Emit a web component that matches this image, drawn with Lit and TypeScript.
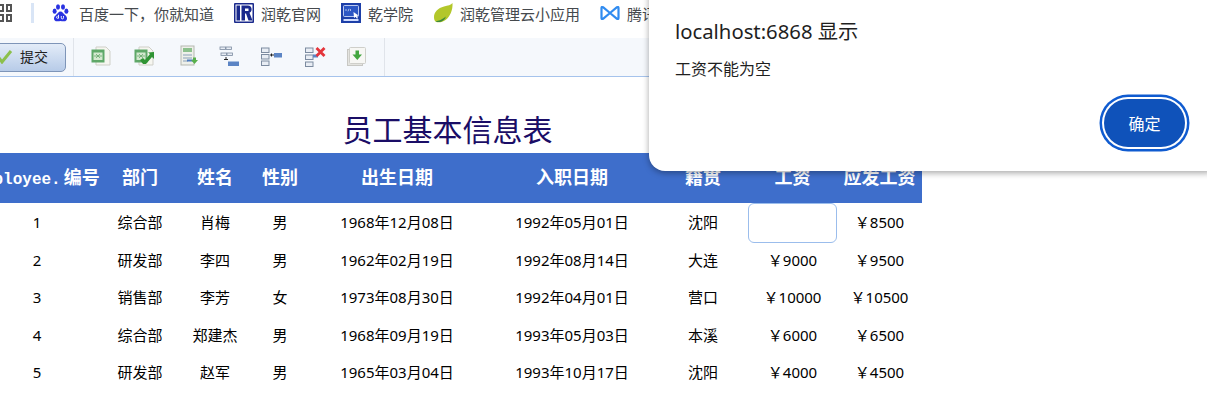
import { LitElement, html, css, svg } from "lit";
import { customElement } from "lit/decorators.js";

const rows = [
  ["1", "综合部", "肖梅", "男", "1968年12月08日", "1992年05月01日", "沈阳", "", "￥8500"],
  ["2", "研发部", "李四", "男", "1962年02月19日", "1992年08月14日", "大连", "￥9000", "￥9500"],
  ["3", "销售部", "李芳", "女", "1973年08月30日", "1992年04月01日", "营口", "￥10000", "￥10500"],
  ["4", "综合部", "郑建杰", "男", "1968年09月19日", "1993年05月03日", "本溪", "￥6000", "￥6500"],
  ["5", "研发部", "赵军", "男", "1965年03月04日", "1993年10月17日", "沈阳", "￥4000", "￥4500"],
];
const heads = ["部门", "姓名", "性别", "出生日期", "入职日期", "籍贯", "工资", "应发工资"];

const baidu = svg`<svg width="17" height="18" viewBox="0 0 17 18"><g fill="#2932e1"><ellipse cx="2.600" cy="7.200" rx="2" ry="2.600"/><ellipse cx="6" cy="3" rx="2" ry="2.700"/><ellipse cx="11" cy="3" rx="2" ry="2.700"/><ellipse cx="14.400" cy="7.200" rx="2" ry="2.600"/><path d="M8.500 7.500c-2 0-2.800 2-4.300 3.300C2.800 12 2 13 2 14.500 2 16.500 3.500 17.500 5.500 17.300c1.200-.1 2-.4 3-.4s1.800.3 3 .4c2 .2 3.500-.8 3.500-2.800 0-1.500-.8-2.500-2.200-3.700C11.300 9.500 10.500 7.500 8.500 7.500z"/></g><path d="M6.500 10.800v3.700M5.500 12.300a1 1 0 1 0 1 1M9.300 12v1.800a1 1 0 0 0 2.200 0V12" fill="none" stroke="#fff" stroke-width=".9"/></svg>`;
const runqian = svg`<svg width="20" height="20" viewBox="0 0 20 20"><rect width="20" height="20" rx="1" fill="#1a2a8c"/><rect x="1.500" y="1.500" width="17" height="17" fill="#fff"/><rect x="2.500" y="2.500" width="3.500" height="15" fill="#1a2a8c"/><path d="M7.500 2.500H14a3.800 3.800 0 0 1 1.500 7.200L18.500 17.500h-4l-2.500-7h-1v7H7.500z" fill="#1a2a8c"/><rect x="11" y="5.500" width="3.500" height="2.500" fill="#fff"/></svg>`;
const college = svg`<svg width="20" height="20" viewBox="0 0 20 20"><rect width="20" height="20" fill="#1d3fa8"/><rect x="2.500" y="2.500" width="15" height="11" rx="1" fill="#2c56c4" stroke="#dfe8ff" stroke-width=".8"/><path d="M5.500 6l-1 1 1 1M8 5.800l-1 2.500M9 6l1 1-1 1" stroke="#fff" stroke-width=".6" fill="none"/><path d="M12.500 9l5 3.500-2 .5 1.500 2-1 .7-1.500-2-1.500 1.200z" fill="#fff"/><rect x="2.500" y="16" width="15" height="2" fill="#cfdcff"/></svg>`;
const leaf = svg`<svg width="20" height="22" viewBox="0 0 20 22"><path d="M19.500 1C18 3 15 3.500 11 4.500 5 6 1 10 1 15c0 2 .5 3.500 1.500 4.500C5 21 9 20.500 12.500 18 17 14.800 20 8 19.500 1z" fill="#b3c72a"/><path d="M2.500 19.500c3-1 7-1.500 10-5 .5 2-2.500 5-6 5.500-1.500.2-3 .2-4-.5z" fill="#3d8a3a"/></svg>`;
const tencent = svg`<svg width="20" height="16" viewBox="0 0 20 16"><path d="M1.500 3 Q1.500 1.500 3 2.200 L10 8 17 2.200 Q18.500 1.500 18.500 3 V13 Q18.500 14.500 17 13.800 L10 8 3 13.800 Q1.500 14.500 1.500 13z" fill="none" stroke="#2f8bf0" stroke-width="2.200" stroke-linejoin="round"/></svg>`;

const sheet = (extra: unknown) => svg`<path d="M5 1h10l4 4v14H5z" fill="#f6f6f0" stroke="#cfcfc8"/><rect x="0.500" y="3.500" width="13" height="13" fill="#5fa868"/><rect x="2.500" y="6.500" width="9" height="7.500" fill="#d4e8cf"/><path d="M3 10h8M5 8l4 4M9 8l-4 4" stroke="#6aaa70" stroke-width=".8"/>${extra}`;
const node = (x: number, y: number) => svg`<rect x="${x}" y="${y}" width="7.500" height="4.500" fill="#e8edf4" stroke="#7c8ba0"/>`;
const cell = (x: number, y: number) => svg`<rect x="${x}" y="${y}" width="5.500" height="2.500" fill="#e8edf4" stroke="#7c8ba0" stroke-width=".8"/>`;
const toolIcons = [
  svg`<svg width="20" height="20" viewBox="0 0 20 20">${sheet("")}</svg>`,
  svg`<svg width="20" height="20" viewBox="0 0 20 20">${sheet(svg`<path d="M6 14l3-2 2 2 5-6-2-1.500 6-.5v7l-2-2-6 7h-3z" fill="#2f9434"/>`)}</svg>`,
  svg`<svg width="18" height="22" viewBox="0 0 18 22"><rect x="1" y="1" width="13" height="19" fill="#eef0ea" stroke="#b5b8b0"/><rect x="3" y="3" width="9" height="4" fill="#8cc08c"/><path d="M3 10h9M3 13h9M3 16h5" stroke="#8aa0b8"/><path d="M7 15.500h6" stroke="#4a7ac0" stroke-width="2"/><path d="M13 12.500h3v2.500h2l-3.500 4-3.500-4h2z" fill="#58b04c"/></svg>`,
  svg`<svg width="21" height="21" viewBox="0 0 21 21">${cell(1, 1)}${cell(7, 1)}${cell(2, 7)}${cell(8, 7)}<path d="M7 11v3" stroke="#222"/><path d="M5 13.500h4" stroke="#222"/><rect x="9" y="15.500" width="11" height="4.500" fill="#5b84c4"/></svg>`,
  svg`<svg width="21" height="20" viewBox="0 0 21 20">${node(0.500, 1)}${node(0.500, 7.500)}${node(0.500, 14)}<path d="M9 8h4M10.500 6.500v3" stroke="#222"/><rect x="13" y="6" width="8" height="4.500" fill="#5b84c4"/></svg>`,
  svg`<svg width="21" height="21" viewBox="0 0 21 21">${node(0.500, 2)}${node(0.500, 9)}${node(0.500, 16)}<path d="M8 10h5" stroke="#5b84c4" stroke-width="3"/><path d="M11.500 2l8 8M19.500 2l-8 8" stroke="#e4343a" stroke-width="2.800"/></svg>`,
  svg`<svg width="19" height="19" viewBox="0 0 19 19"><rect x="0.500" y="2.500" width="15" height="16" fill="#e4e4e0" stroke="#c8c8c4"/><rect x="2.500" y="0.500" width="16" height="16" rx="1" fill="#f7f7f4" stroke="#cfcfca"/><path d="M8.500 3.500h3.500v4h3l-4.700 5.500L5.500 7.500h3z" fill="#43a63f"/></svg>`,
];
const tools = [
  [91, 8], [134, 8], [180, 7], [219, 8], [261, 9], [305, 8], [347, 9],
];

@customElement("app-root")
export class AppRoot extends LitElement {
  static styles = css`
    :host { display: block; position: relative; width: 1207px; height: 400px; overflow: hidden; background: #fff; font-family: "Noto Sans", "Noto Sans CJK SC", sans-serif; color: #000; }
    .bookmarks { height: 38px; display: flex; align-items: center; color: #45494d; font-size: 15px; white-space: nowrap; box-sizing: border-box; padding-bottom: 12px; }
    .apps { width: 14px; height: 18px; margin-left: -2px; display: grid; grid-template-columns: 6px 6px; grid-template-rows: 8px 8px; gap: 2px; margin-right: 19px; }
    .apps i { border: 2px solid #555; box-sizing: border-box; }
    .sep { width: 3px; height: 20px; background: #d9e5f6; margin-right: 18px; }
    .bm { display: inline-flex; align-items: center; gap: 7px; margin-right: 20px; }
    .bm.wide { gap: 10px; }
    .toolbar { height: 38px; background: #f5f8fc; border-bottom: 1px solid #a5c3ec; display: flex; align-items: center; position: relative; }
    .submit { width: 88px; height: 29px; margin-left: -22px; box-sizing: border-box; border: 1px solid #7e95b8; border-radius: 5px; background: linear-gradient(#e3ecf8, #b7cbe8); display: flex; align-items: center; justify-content: flex-end; gap: 6px; padding: 0 17px 2px 0; font-size: 14px; color: #222; flex: none; }
    .divider { width: 1px; height: 38px; background: #e0e4ea; margin-left: 7px; flex: none; }
    .tool { position: absolute; display: block; line-height: 0; }
    .end { position: absolute; left: 384px; top: 0; width: 1px; height: 38px; background: #e0e4ea; }
    h1 { margin: 0; height: 76px; box-sizing: border-box; padding-top: 31px; text-align: center; width: 895px; font-weight: 400; font-size: 30px; line-height: 44px; color: #1a0d66; }
    table { border-collapse: collapse; table-layout: fixed; width: 950px; margin-left: -28px; }
    th { height: 46px; padding: 0 0 4px; background: #3e6ecb; color: #fff; font-size: 18px; font-weight: 700; font-family: "Noto Sans CJK SC", sans-serif; white-space: nowrap; text-align: center; }
    th .latin { font-family: "Liberation Mono", monospace; font-size: 16px; margin-right: 3px; }
    td { padding: 9px 0 0; font-size: 15px; line-height: 20px; text-align: center; white-space: nowrap; vertical-align: top; height: 29px; }
    tr:nth-child(even) td { height: 28px; }
    td.input { padding: 0; height: 38px; }
    .field { display: block; width: 89px; height: 40px; box-sizing: border-box; border: 1px solid #9bbdec; border-radius: 6px; margin-bottom: -2px; background: #fff; }
    .dialog { position: absolute; left: 649px; top: -30px; width: 572px; height: 201px; box-sizing: border-box; background: #fff; border-radius: 16px; box-shadow: 0 2px 6px rgba(0,0,0,.35); }
    .dialog .title { position: absolute; left: 26px; top: 47px; font-size: 20.300px; line-height: 28px; color: #1f1f1f; white-space: nowrap; }
    .dialog .msg { position: absolute; left: 26px; top: 88px; font-size: 16px; line-height: 22px; color: #1f1f1f; }
    .ok { position: absolute; left: 455px; top: 129px; width: 81px; height: 48px; border: 0; padding: 0; border-radius: 24px; background: #0f52ba; color: #fff; font-size: 16px; box-shadow: 0 0 0 2px #fff, 0 0 0 4.500px #0f5bd0; display: flex; align-items: center; justify-content: center; font-family: inherit; }
  `;
  render() {
    const widths = [130, 76, 74, 56, 178, 172, 90, 89, 85];
    return html`
      <div class="bookmarks">
        <span class="apps"><i></i><i></i><i></i><i></i></span>
        <span class="sep"></span>
        <span class="bm wide">${baidu}百度一下，你就知道</span>
        <span class="bm">${runqian}润乾官网</span>
        <span class="bm">${college}乾学院</span>
        <span class="bm">${leaf}润乾管理云小应用</span>
        <span class="bm">${tencent}腾讯</span>
      </div>
      <div class="toolbar">
        <div class="submit">
          <svg width="16" height="16" viewBox="0 0 16 16"><path d="M1 10l3 4L13 3" fill="none" stroke="#8cc04c" stroke-width="3"/></svg>提交
        </div>
        <span class="divider"></span>
        ${toolIcons.map((ic, i) => html`<span class="tool" style="left:${tools[i][0]}px;top:${tools[i][1]}px">${ic}</span>`)}
        <span class="end"></span>
      </div>
      <h1>员工基本信息表</h1>
      <table>
        <colgroup>${widths.map((w) => html`<col style="width:${w}px" />`)}</colgroup>
        <thead><tr><th><span class="latin">Employee.</span>编号</th>${heads.map((h) => html`<th>${h}</th>`)}</tr></thead>
        <tbody>
          ${rows.map((r, ri) => html`<tr>${r.map((c, ci) =>
            ri === 0 && ci === 7 ? html`<td class="input"><span class="field"></span></td>` : html`<td>${c}</td>`)}</tr>`)}
        </tbody>
      </table>
      <div class="dialog">
        <div class="title">localhost:6868 显示</div>
        <div class="msg">工资不能为空</div>
        <button class="ok">确定</button>
      </div>
    `;
  }
}
